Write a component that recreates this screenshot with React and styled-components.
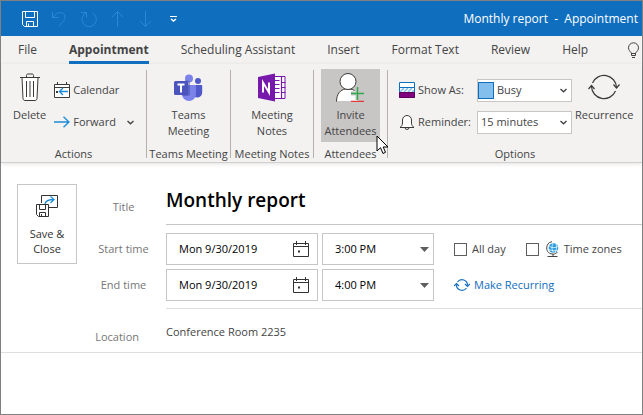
import { useState } from "react";
import styled, { createGlobalStyle } from "styled-components";

const tabs = [
  "File",
  "Appointment",
  "Scheduling Assistant",
  "Insert",
  "Format Text",
  "Review",
  "Help",
];

const timeRows = [
  { id: "start", label: "Start time", date: "Mon 9/30/2019", time: "3:00 PM" },
  { id: "end", label: "End time", date: "Mon 9/30/2019", time: "4:00 PM" },
];

const GlobalStyle = createGlobalStyle`
  * {
    box-sizing: border-box;
  }

  body {
    margin: 0;
    background: white;
  }

  body, button, input, select {
    font-family: "Open Sans", "Noto Sans", sans-serif;
    font-size: 11px;
    line-height: 16px;
    color: #444;
  }

  svg {
    display: block;
    flex: none;
  }
`;

const Window = styled.div`
  min-height: 100vh;
  border: 1px solid #808080;
  background: white;
`;

const TitleBar = styled.header`
  display: flex;
  align-items: center;
  height: 35px;
  padding: 0 4px 0 21px;
  background: #106ebe;
`;

const QuickAccess = styled.div`
  display: flex;
  align-items: center;
  gap: 12px;
`;

const IconButton = styled.button`
  display: flex;
  padding: 0;
  border: none;
  background: none;
  color: ${(props) => (props.disabled ? "#2b88d8" : "white")};
`;

const WindowTitle = styled.div`
  margin-left: auto;
  color: white;
  font-size: 12px;
  white-space: pre;
`;

const TabBar = styled.nav`
  display: flex;
  gap: 32px;
  height: 28px;
  padding: 0 2px 0 17px;
  background: #f3f2f1;
`;

const Tab = styled.button`
  padding: 3px 0 0;
  border: none;
  border-bottom: 3px solid ${(props) => (props.$active ? "#106ebe" : "transparent")};
  background: none;
  font-size: 12px;
  font-weight: ${(props) => (props.$active ? 700 : 400)};
  white-space: nowrap;
`;

const TipButton = styled(IconButton)`
  align-items: center;
  margin-left: auto;
  padding-top: 2px;
  color: #444;
`;

const Ribbon = styled.div`
  display: flex;
  height: 99px;
  border-bottom: 1px solid #d2d0ce;
  background: #f3f2f1;
  box-shadow: 0 1px 4px rgba(0, 0, 0, 0.12);
`;

const Separator = styled.div`
  width: 1px;
  margin: 6px 0 4px;
  background: #b3b0ad;
`;

const Group = styled.section`
  display: flex;
  flex-direction: column;
  flex: ${(props) => (props.$width ? `0 0 ${props.$width}px` : 1)};
  padding-top: 5px;
`;

const GroupBody = styled.div`
  display: flex;
  justify-content: ${(props) => props.$justify || "center"};
  gap: ${(props) => props.$gap || 0}px;
  height: 73px;
  padding-left: ${(props) => props.$indent || 0}px;
`;

const GroupLabel = styled.div`
  margin-top: 4px;
  text-align: center;
  white-space: nowrap;
`;

const LargeButton = styled.button`
  position: relative;
  display: flex;
  flex-direction: column;
  align-items: center;
  padding: 3px 3px 0;
  border: none;
  background: ${(props) => (props.$hover ? "#c8c6c4" : "none")};

  svg {
    margin-bottom: 5px;
  }
`;

const Pointer = styled.span`
  position: absolute;
  right: -9px;
  bottom: -18px;
  z-index: 2;
`;

const Stack = styled.div`
  display: flex;
  flex-direction: column;
  gap: 8px;
  padding-top: 9px;
`;

const SmallButton = styled.button`
  display: flex;
  align-items: center;
  gap: 3px;
  height: 24px;
  padding: 0;
  border: none;
  background: none;
`;

const Chevron = styled.span`
  margin-left: 8px;
`;

const OptionRow = styled.div`
  display: grid;
  grid-template-columns: 16px 56px 95px;
  align-items: center;
  column-gap: 3px;
  height: 24px;
  white-space: nowrap;
`;

const OptionField = styled.div`
  display: flex;
  align-items: center;
  height: 23px;
  padding-right: 4px;
  border: 1px solid #c8c6c4;
  background: white;
`;

const Swatch = styled.span`
  flex: none;
  width: 16px;
  height: 17px;
  border: 1px solid #106ebe;
  background: #83beec;
`;

const PlainSelect = styled.select`
  flex: 1;
  min-width: 0;
  padding: 0 0 0 ${(props) => props.$indent || 3}px;
  border: none;
  outline: none;
  background: none;
  appearance: none;
`;

const Form = styled.main`
  display: grid;
  grid-template-columns: 60px 1fr;
  padding: 21px 0 0 16px;
`;

const SaveButton = styled.button`
  display: flex;
  flex-direction: column;
  align-items: center;
  align-self: start;
  height: 80px;
  padding: 9px 0 0;
  border: 1px solid #c8c6c4;
  background: white;
  color: #333;
  line-height: 15px;

  svg {
    margin-bottom: 8px;
  }
`;

const Fields = styled.div`
  display: flex;
  flex-direction: column;
  gap: 4px;
`;

const FieldRow = styled.div`
  display: grid;
  grid-template-columns: 77px 1fr;
  align-items: center;
  column-gap: 4px;
  padding-left: 8px;
`;

const FieldLabel = styled.label`
  color: #767676;
  text-align: center;
  white-space: nowrap;
`;

const TitleInput = styled.input`
  width: 100%;
  height: 41px;
  margin-bottom: 4px;
  padding: 0 0 8px;
  border: none;
  border-bottom: 1px solid #c8c6c4;
  outline: none;
  color: black;
  font-size: 19px;
  font-weight: 600;
  line-height: 24px;
`;

const Controls = styled.div`
  display: flex;
  align-items: center;
  gap: 4px;
`;

const Box = styled.div`
  display: flex;
  align-items: center;
  width: ${(props) => props.$width}px;
  height: 32px;
  padding-right: ${(props) => props.$end}px;
  border: 1px solid #c8c6c4;
  color: #605e5c;
`;

const DateInput = styled.input`
  flex: 1;
  min-width: 0;
  padding: 0 0 0 12px;
  border: none;
  outline: none;
  color: black;
`;

const TimeSelect = styled(PlainSelect)`
  color: black;
`;

const Extras = styled.div`
  display: flex;
  align-items: center;
  gap: 20px;
  padding-left: 16px;
  white-space: nowrap;
`;

const CheckLabel = styled.label`
  display: flex;
  align-items: center;
  gap: 5px;
`;

const Checkbox = styled.input`
  width: 13px;
  height: 13px;
  margin: 0;
  border: 1px solid #605e5c;
  background: ${(props) => (props.checked ? "#106ebe" : "white")};
  appearance: none;
`;

const RecurLink = styled.a`
  display: flex;
  align-items: center;
  gap: 4px;
  color: #106ebe;
  text-decoration: none;
`;

const LocationRow = styled.div`
  display: grid;
  grid-template-columns: 138px 1fr;
  column-gap: 27px;
  margin-top: 7px;
  border-bottom: 1px solid #e1dfdd;
`;

const LocationLabel = styled(FieldLabel)`
  align-self: end;
  padding-bottom: 7px;
  text-align: right;
`;

const LocationInput = styled.input`
  height: 44px;
  padding: 2px 0 0;
  border: none;
  border-top: 1px solid #e1dfdd;
  outline: none;
`;

const SaveIcon = () => (
  <svg width="16" height="16" viewBox="0 0 16 16" fill="none" stroke="currentColor">
    <path d="M.5 .5h15v15h-13l-2-2z" />
    <path d="M3.500 .5v6h9v-6M4.500 15.500v-5h7v5M6.500 12.500v3" />
  </svg>
);

const UndoIcon = () => (
  <svg width="18" height="16" viewBox="0 0 18 16" fill="none" stroke="currentColor">
    <path d="M2.500 .5v6h6M2.500 6.500C5 4 7 1.500 10.500 1.500c3 0 4.500 2 4.500 4.500 0 3.500-3 5.500-6.500 9.500" />
  </svg>
);

const RedoIcon = () => (
  <svg width="18" height="16" viewBox="0 0 18 16" fill="none" stroke="currentColor">
    <path d="M1 1.500h5.500v5M6.500 1.700A7.200 7.200 0 1 0 12.500 2" />
  </svg>
);

const ArrowIcon = ({ down }) => (
  <svg width="16" height="16" viewBox="1 0 16 16" fill="none" stroke="currentColor">
    <path d={down ? "M8.500 0v15.500M3 10l5.500 5.500L14 10" : "M8.500 16V.5M3 6L8.500 .5L14 6"} />
  </svg>
);

const MoreIcon = () => (
  <svg width="13" height="8" viewBox="-3 0 13 8" fill="none" stroke="currentColor">
    <path d="M1 1.500h7" />
    <path d="M2 4l2.500 2L7 4" strokeWidth="1.500" />
  </svg>
);

const BulbIcon = () => (
  <svg width="13" height="18" viewBox="0 0 13 18" fill="none" stroke="currentColor">
    <path d="M4.500 13.500v-2.500C3 9.500 1.500 8 1.500 5.800a5 5 0 0 1 10 0C11.500 8 10 9.500 8.500 11v2.500zM4.500 11.500h4M5 15.500h3" />
  </svg>
);

const TrashIcon = () => (
  <svg width="22" height="30" viewBox="0 0 22 30" fill="none" stroke="#3b3a39">
    <path d="M3 5.500l1 21c.1 1 .7 2 2 2h10c1.300 0 1.900-1 2-2l1-21z" fill="white" />
    <path d="M1 5.500h20M7.500 5V3.500c0-1 .5-1.500 1.500-1.500h4c1 0 1.500 .5 1.500 1.500V5M7.500 9v16M11 9v16M14.500 9v16" />
  </svg>
);

const CalendarBackIcon = () => (
  <svg width="16" height="16" viewBox="0 0 16 16" fill="none" stroke="#3b3a39">
    <path d="M.5 2.500h15v13H.5zM.5 5.500h15M3.500 0v3M12.500 0v3" fill="white" />
    <path d="M2 10h2" strokeWidth="2" />
    <path d="M14 9.500H5.500M9 6l-3.500 3.500L9 13" stroke="#1e8bd8" strokeWidth="1.400" />
  </svg>
);

const ForwardIcon = () => (
  <svg width="16" height="12" viewBox="0 0 16 12" fill="none" stroke="#1e8bd8" strokeWidth="1.300">
    <path d="M0 6h15M9.500 .8L15 6l-5.500 5.200" />
  </svg>
);

const ChevronIcon = () => (
  <svg width="7" height="5" viewBox="0 0 7 5" fill="none" stroke="#444" strokeWidth="1.400">
    <path d="M.5 1l3 2.700L6.500 1" />
  </svg>
);

const TeamsIcon = () => (
  <svg width="30" height="30" viewBox="0 0 30 30">
    <circle cx="25" cy="9" r="3" fill="#5059c9" />
    <path d="M19 13h9.200c.6 0 1 .4 1 1v6a5 5 0 0 1-10 1z" fill="#5059c9" />
    <circle cx="16" cy="6.500" r="4" fill="#7b83eb" />
    <path d="M10 13h12c.7 0 1 .4 1 1v8a7 7 0 0 1-14 0v-8z" fill="#7b83eb" />
    <path d="M12 8.500h3c1 0 2 .8 2 2V22c0 1-1 2-2 2H9.300L9 13z" fill="#4048a0" opacity=".5" />
    <rect x="1" y="9" width="14" height="14" rx="1.500" fill="#4b53bc" />
    <path d="M4.500 12.500h7M8 12.500v8" fill="none" stroke="white" strokeWidth="2" />
  </svg>
);

const OneNoteIcon = () => (
  <svg width="30" height="30" viewBox="0 0 30 30" fill="none">
    <path d="M16 4.500h12v22H16" fill="white" stroke="#7719aa" />
    <path d="M24.500 4.500v22M24.500 10.500h4M24.500 15.500h4M24.500 20.500h4M18 8.500h4.500M18 12.500h4.500M18 16.500h4.500M18 20.500h4.500" stroke="#7719aa" strokeWidth="1.200" />
    <path d="M1 5l17-3.500v28L1 26z" fill="#7719aa" />
    <path d="M6 20.500v-10l6 10v-10" stroke="white" strokeWidth="2" />
  </svg>
);

const InviteIcon = () => (
  <svg width="30" height="30" viewBox="0 0 30 30" fill="none">
    <path d="M1.500 29c0-7 4-11.500 9-12h5c3 .3 5.500 2 7 4.500V29z" fill="white" />
    <path d="M1.500 29.500c0-7.500 4-12 9-12.500h4c2 .1 3.500 .6 5 1.500" stroke="#3b3a39" />
    <circle cx="13" cy="9.500" r="8" fill="white" stroke="#3b3a39" />
    <path d="M22.500 15v13M16 21.500h13" stroke="#c8c6c4" strokeWidth="4" />
    <path d="M22.500 15v13M16 21.500h13" stroke="#2fa84f" strokeWidth="1.500" />
    <path d="M16 29.500h13" stroke="#e03a3a" strokeWidth="1.500" />
  </svg>
);

const CursorIcon = () => (
  <svg width="13" height="20" viewBox="0 0 13 20">
    <path d="M1 1v15l3.500-3.300L7 18.500l2.500-1.200L7.200 12H12z" fill="white" stroke="black" />
  </svg>
);

const ShowAsIcon = () => (
  <svg width="16" height="16" viewBox="0 0 16 16">
    <path d="M.5 .5h15v15H.5z" fill="white" stroke="#106ebe" />
    <path d="M1 10l4-4M5 10l4-4M9 10l4-4M13 10l2-2" stroke="#83beec" strokeWidth="1.500" />
    <path d="M0 5.500h16" stroke="#106ebe" />
    <path d="M.5 10.500h15v5H.5z" fill="#800080" stroke="#5c005c" />
  </svg>
);

const BellIcon = () => (
  <svg width="16" height="17" viewBox="0 0 16 17" fill="none" stroke="#3b3a39">
    <path d="M1 13.500h14c-1.500-1-2.500-2.500-2.500-4.500V6a4.500 4.500 0 0 0-9 0v3c0 2-1 3.500-2.500 4.500z" fill="white" />
    <path d="M6 13.500a2 2 0 0 0 4 0" />
  </svg>
);

const RecurrenceIcon = () => (
  <svg width="34" height="30" viewBox="0 0 34 30" fill="none" stroke="#3b3a39" strokeWidth="1.200">
    <path d="M5.500 11a12.500 12.500 0 0 1 24 4.500M28.500 19a12.500 12.500 0 0 1-24-4.500" />
    <path d="M26.500 12.500l3 3.500 3-3.500M1.500 17l3-3.500 3 3.500" />
  </svg>
);

const SaveCloseIcon = () => (
  <svg width="24" height="24" viewBox="0 0 24 24" fill="none" stroke="#333">
    <path d="M6.500 9V1.500h16v12H14" />
    <path d="M10 10c.5-3 3-4.500 9-4.500M15.500 2.500l3.500 3-3.500 3.500" stroke="#1e8bd8" strokeWidth="1.300" />
    <path d="M1.500 10.500h12v12h-10l-2-2zM4.500 10.500v5h6v-5M4.500 22.500v-4h6v4M6.500 20v2.500" fill="white" />
  </svg>
);

const DateIcon = () => (
  <svg width="16" height="17" viewBox="0 0 16 17" fill="none" stroke="#333">
    <path d="M.5 2.500h15v13H.5zM.5 5.500h15M3.500 0v4M12.500 0v4" />
    <path d="M5 10.500h2" strokeWidth="2" />
  </svg>
);

const TriangleIcon = () => (
  <svg width="9" height="5" viewBox="0 0 9 5">
    <path d="M0 0h9L4.500 5z" fill="#605e5c" />
  </svg>
);

const GlobeIcon = () => (
  <svg width="15" height="16" viewBox="-2 0 15 16" fill="none">
    <circle cx="7.500" cy="7" r="4.800" fill="#2b9be0" />
    <path d="M3.500 5.500c3 1.500 6 1.500 8.500 0M3 8.500c3 1.500 6 1.500 8.500 .5M7 2.500c-1.500 3-1.500 6 .5 9M10 3c1 3 .5 6-1 8.500" stroke="white" strokeWidth=".7" />
    <path d="M6 .7C2.500 1 .7 4 .7 7c0 4 3 6.300 6.800 6 1.500 0 3-.7 4-2M7 13v2M1.500 15.500h10" stroke="#444" />
  </svg>
);

const RecurIcon = () => (
  <svg width="16" height="14" viewBox="0 0 16 14" fill="none" stroke="#106ebe" strokeWidth="1.200">
    <path d="M3.500 4a5.500 5.500 0 0 1 10 3.500M12.500 10a5.500 5.500 0 0 1-10-3.500" />
    <path d="M11 6l2.500 2.500L16 6M0 8l2.500-2.500L5 8" />
  </svg>
);

const RibbonBar = () => (
  <Ribbon>
    <Group $width={145}>
      <GroupBody $justify="flex-start" $indent={9} $gap={5}>
        <LargeButton>
          <TrashIcon />
          Delete
        </LargeButton>
        <Stack>
          <SmallButton>
            <CalendarBackIcon />
            Calendar
          </SmallButton>
          <SmallButton>
            <ForwardIcon />
            Forward
            <Chevron>
              <ChevronIcon />
            </Chevron>
          </SmallButton>
        </Stack>
      </GroupBody>
      <GroupLabel>Actions</GroupLabel>
    </Group>
    <Separator />
    <Group $width={83}>
      <GroupBody>
        <LargeButton>
          <TeamsIcon />
          Teams
          <br />
          Meeting
        </LargeButton>
      </GroupBody>
      <GroupLabel>Teams Meeting</GroupLabel>
    </Group>
    <Separator />
    <Group $width={82}>
      <GroupBody>
        <LargeButton>
          <OneNoteIcon />
          Meeting
          <br />
          Notes
        </LargeButton>
      </GroupBody>
      <GroupLabel>Meeting Notes</GroupLabel>
    </Group>
    <Separator />
    <Group $width={73}>
      <GroupBody>
        <LargeButton $hover>
          <InviteIcon />
          Invite
          <br />
          Attendees
          <Pointer>
            <CursorIcon />
          </Pointer>
        </LargeButton>
      </GroupBody>
      <GroupLabel>Attendees</GroupLabel>
    </Group>
    <Separator />
    <Group>
      <GroupBody $justify="flex-start" $indent={11}>
        <Stack>
          <OptionRow>
            <ShowAsIcon />
            <label htmlFor="show-as">Show As:</label>
            <OptionField>
              <Swatch />
              <PlainSelect id="show-as">
                <option>Busy</option>
                <option>Free</option>
              </PlainSelect>
              <ChevronIcon />
            </OptionField>
          </OptionRow>
          <OptionRow>
            <BellIcon />
            <label htmlFor="reminder">Reminder:</label>
            <OptionField>
              <PlainSelect id="reminder">
                <option>15 minutes</option>
                <option>30 minutes</option>
              </PlainSelect>
              <ChevronIcon />
            </OptionField>
          </OptionRow>
        </Stack>
        <LargeButton>
          <RecurrenceIcon />
          Recurrence
        </LargeButton>
      </GroupBody>
      <GroupLabel>Options</GroupLabel>
    </Group>
  </Ribbon>
);

const App = () => {
  const [activeTab, setActiveTab] = useState("Appointment");
  const [title, setTitle] = useState("Monthly report");
  const [allDay, setAllDay] = useState(false);
  const [timeZones, setTimeZones] = useState(false);

  return (
    <Window>
      <GlobalStyle />
      <TitleBar>
        <QuickAccess>
          <IconButton aria-label="Save"><SaveIcon /></IconButton>
          <IconButton aria-label="Undo" disabled><UndoIcon /></IconButton>
          <IconButton aria-label="Redo" disabled><RedoIcon /></IconButton>
          <IconButton aria-label="Previous item" disabled><ArrowIcon /></IconButton>
          <IconButton aria-label="Next item" disabled><ArrowIcon down /></IconButton>
          <IconButton aria-label="Customize toolbar"><MoreIcon /></IconButton>
        </QuickAccess>
        <WindowTitle>{title}{"  -  Appointment"}</WindowTitle>
      </TitleBar>
      <TabBar>
        {tabs.map((tab) => (
          <Tab key={tab} $active={tab === activeTab} onClick={() => setActiveTab(tab)}>
            {tab}
          </Tab>
        ))}
        <TipButton aria-label="Tell me"><BulbIcon /></TipButton>
      </TabBar>
      <RibbonBar />
      <Form>
        <SaveButton>
          <SaveCloseIcon />
          <span>Save &amp;</span>
          <span>Close</span>
        </SaveButton>
        <Fields>
          <FieldRow>
            <FieldLabel htmlFor="title">Title</FieldLabel>
            <TitleInput id="title" value={title} onChange={(e) => setTitle(e.target.value)} />
          </FieldRow>
          {timeRows.map((row) => (
            <FieldRow key={row.id}>
              <FieldLabel htmlFor={row.id}>{row.label}</FieldLabel>
              <Controls>
                <Box $width={152} $end={8}>
                  <DateInput id={row.id} defaultValue={row.date} />
                  <IconButton aria-label="Pick a date"><DateIcon /></IconButton>
                </Box>
                <Box $width={112} $end={4}>
                  <TimeSelect $indent={12} aria-label={`${row.label} hour`}>
                    <option>{row.time}</option>
                  </TimeSelect>
                  <TriangleIcon />
                </Box>
                {row.id === "start" ? (
                  <Extras>
                    <CheckLabel>
                      <Checkbox
                        type="checkbox"
                        checked={allDay}
                        onChange={() => setAllDay(!allDay)}
                      />
                      All day
                    </CheckLabel>
                    <CheckLabel>
                      <Checkbox
                        type="checkbox"
                        checked={timeZones}
                        onChange={() => setTimeZones(!timeZones)}
                      />
                      <GlobeIcon />
                      Time zones
                    </CheckLabel>
                  </Extras>
                ) : (
                  <Extras>
                    <RecurLink href="#recurring">
                      <RecurIcon />
                      Make Recurring
                    </RecurLink>
                  </Extras>
                )}
              </Controls>
            </FieldRow>
          ))}
        </Fields>
      </Form>
      <LocationRow>
        <LocationLabel htmlFor="location">Location</LocationLabel>
        <LocationInput id="location" defaultValue="Conference Room 2235" />
      </LocationRow>
    </Window>
  );
};

export default App;
